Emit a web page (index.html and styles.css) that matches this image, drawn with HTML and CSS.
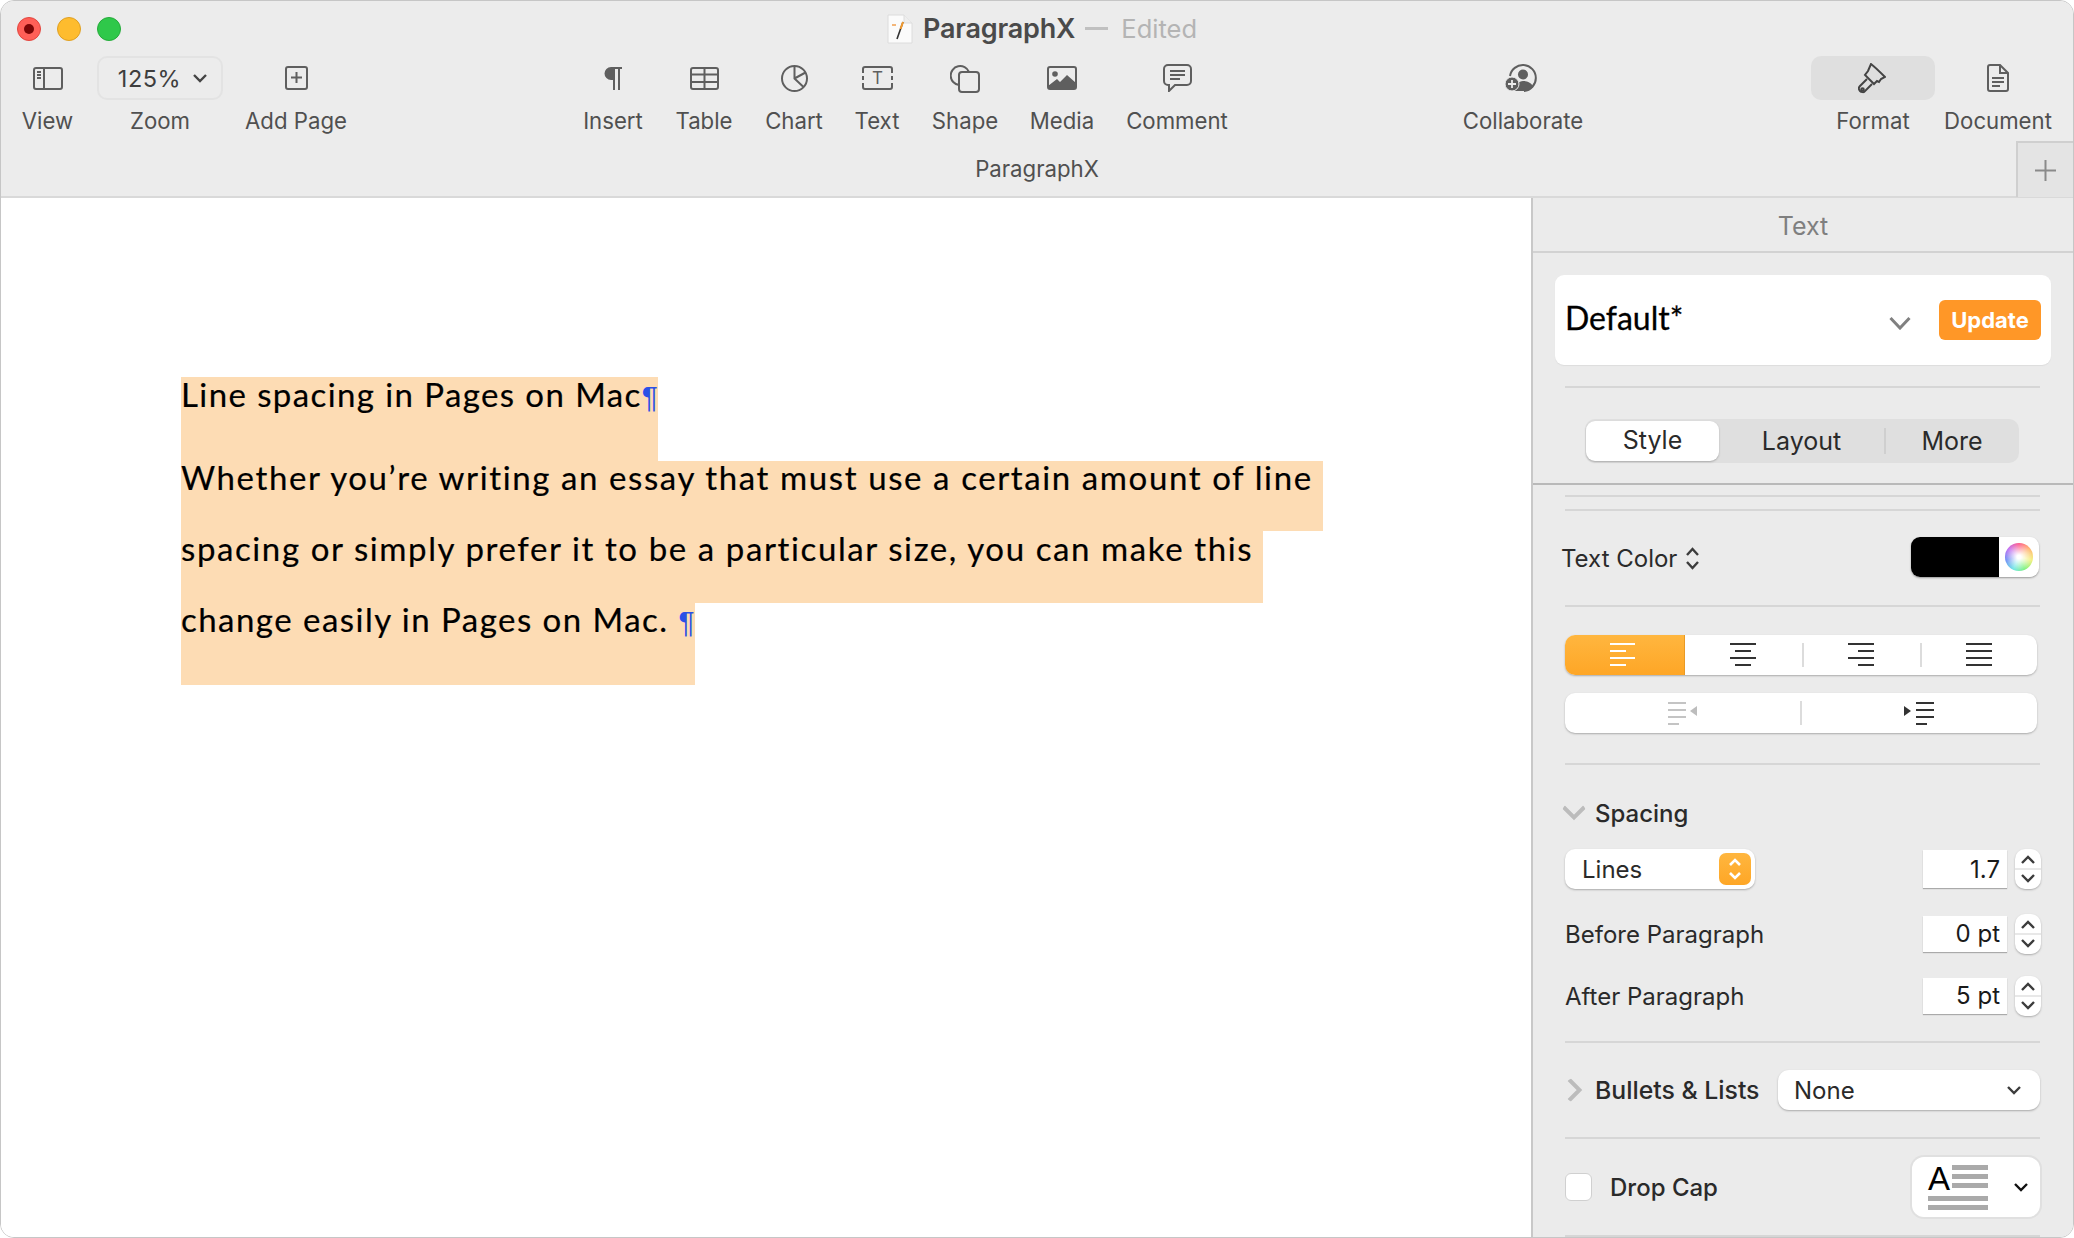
FILE: index.html
```html
<!DOCTYPE html>
<html lang="en">
<head>
<meta charset="utf-8">
<title>ParagraphX</title>
<link rel="stylesheet" href="styles.css">
</head>
<body>
<div class="window">
  <header class="toolbar">
    <div class="titlebar">
      <div class="lights">
        <span class="light red"><i></i></span>
        <span class="light yellow"></span>
        <span class="light green"></span>
      </div>
      <div class="title">
        <svg class="docicon" viewBox="0 0 26 30"><path d="M1 1h16l8 8v20H1z" fill="#fbfbfb" stroke="#dcdcdc"/><path d="M17 1v8h8" fill="#eee" stroke="#dcdcdc"/><path d="M16 8l-6 17" stroke="#333" stroke-width="1.600"/><path d="M16 8l-2.500 7" stroke="#f29a2e" stroke-width="2"/><path d="M5 10h4v2H5z" fill="#f3b679"/></svg>
        <b>ParagraphX</b><span class="dash"></span><span class="edited">Edited</span>
      </div>
    </div>
    <div class="tools">
      <div class="tool">
        <div class="ti"><svg width="30" height="23" viewBox="0 0 30 23" class="ic"><rect x="1" y="1" width="28" height="21" rx="2"/><path d="M11 1v21M4 5h4M4 8h4M4 11h4"/></svg></div>
        <span>View</span>
      </div>
      <div class="tool">
        <div class="ti zoombox"><em>125%</em><svg width="14" height="9" viewBox="0 0 14 9" class="ic thick"><path d="M1 1l6 6 6-6"/></svg></div>
        <span>Zoom</span>
      </div>
      <div class="tool">
        <div class="ti"><svg width="23" height="24" viewBox="0 0 23 24" class="ic"><rect x="1" y="1" width="21" height="22" rx="2"/><path d="M11.500 6v11M6 11.500h11"/></svg></div>
        <span>Add Page</span>
      </div>
      <div class="gap"></div>
      <div class="tool">
        <div class="ti"><svg width="20" height="25" viewBox="0 0 20 25"><path d="M8 1h11v2h-2v21h-2V3h-3v21H10V14H8A6.500 6.500 0 0 1 8 1z" fill="#5f5f5f"/></svg></div>
        <span>Insert</span>
      </div>
      <div class="tool">
        <div class="ti"><svg width="29" height="23" viewBox="0 0 29 23" class="ic"><rect x="1" y="1" width="27" height="21" rx="2"/><path d="M1 7.500h27M1 15h27M14.500 1v21"/></svg></div>
        <span>Table</span>
      </div>
      <div class="tool">
        <div class="ti"><svg width="27" height="27" viewBox="0 0 27 27" class="ic"><circle cx="13.500" cy="13.500" r="12.500"/><path d="M13.500 1v12.500l9 8.500M13.500 13.500l11-6"/></svg></div>
        <span>Chart</span>
      </div>
      <div class="tool">
        <div class="ti"><svg width="31" height="24" viewBox="0 0 31 24" class="ic"><path d="M1 7V3a2 2 0 0 1 2-2h25a2 2 0 0 1 2 2v4M1 17v4a2 2 0 0 0 2 2h25a2 2 0 0 0 2-2v-4M1 10v4M30 10v4"/><text x="15.500" y="18" class="icont">T</text></svg></div>
        <span>Text</span>
      </div>
      <div class="tool">
        <div class="ti"><svg width="30" height="29" viewBox="0 0 30 29" class="ic"><path d="M9 21a9.500 9.500 0 1 1 10-13"/><rect x="9" y="8" width="20" height="20" rx="3"/></svg></div>
        <span>Shape</span>
      </div>
      <div class="tool">
        <div class="ti"><svg width="30" height="24" viewBox="0 0 30 24"><rect x="1" y="1" width="28" height="22" rx="2" fill="#ececec" stroke="#5f5f5f" stroke-width="2"/><circle cx="8" cy="8" r="2.800" fill="#5f5f5f"/><path d="M1 20l9-7 3 3 7-7 9 8v6H1z" fill="#5f5f5f"/></svg></div>
        <span>Media</span>
      </div>
      <div class="tool">
        <div class="ti"><svg width="29" height="28" viewBox="0 0 29 28" class="ic"><path d="M5 1h19a4 4 0 0 1 4 4v12a4 4 0 0 1-4 4H12l-6 6v-6H5a4 4 0 0 1-4-4V5a4 4 0 0 1 4-4z"/><path d="M7 7h15M7 11h15M7 15h10"/></svg></div>
        <span>Comment</span>
      </div>
      <div class="gap"></div>
      <div class="tool">
        <div class="ti"><svg class="collab" width="32" height="28" viewBox="0 0 32 28"><path d="M5 12A13 13 0 1 1 19 27" fill="none" stroke="#5f5f5f" stroke-width="2"/><circle cx="18" cy="10.500" r="5" fill="#5f5f5f"/><path d="M10 27c0-6 4-10 8-10s9 2 10 6c-3 3-6 4-10 4z" fill="#5f5f5f"/><circle cx="7" cy="20" r="7" fill="#5f5f5f" stroke="#ececec" stroke-width="1"/><path d="M7 16v8M3 20h8" stroke="#ececec" stroke-width="1.800"/></svg></div>
        <span>Collaborate</span>
      </div>
      <div class="gap"></div>
      <div class="tool">
        <div class="ti active"><svg class="ic darkic brush" width="28" height="31" viewBox="0 0 28 31"><path d="M13 1c4 3 9 8 14 13l-4 2-2 3-2-1-3 3-9-9 3-4z"/><path d="M9 16l-7 7c-2 2-1 4 0 5s4 2 5 0l7-7"/><circle cx="4.500" cy="26.500" r="1.300"/></svg></div>
        <span>Format</span>
      </div>
      <div class="tool">
        <div class="ti"><svg width="22" height="28" viewBox="0 0 22 28" class="ic"><path d="M3 1h10l8 8v16a2 2 0 0 1-2 2H3a2 2 0 0 1-2-2V3a2 2 0 0 1 2-2z"/><path d="M13 1v8h8M5 14h12M5 18h12M5 22h8"/></svg></div>
        <span>Document</span>
      </div>
    </div>
    <div class="tabline">
      <span class="tabname">ParagraphX</span>
      <div class="addtab"><svg width="21" height="21" viewBox="0 0 21 21"><path d="M10.500 0v21M0 10.500h21" stroke="#8a8a8a" stroke-width="2"/></svg></div>
    </div>
  </header>

  <div class="main">
    <main class="doc">
      <div class="line l1"><span>Line spacing in Pages on Mac</span><span class="pil">¶</span></div>
      <div class="line l2"><span>Whether you’re writing an essay that must use a certain amount of line</span></div>
      <div class="line l3"><span>spacing or simply prefer it to be a particular size, you can make this</span></div>
      <div class="line l4"><span>change easily in Pages on Mac. </span><span class="pil">¶</span></div>
    </main>

    <aside class="side">
      <div class="sidehead">Text</div>
      <div class="stylecard">
        <span class="stylename">Default*</span>
        <svg width="22" height="14" viewBox="0 0 22 14" class="chev grey"><path d="M1.500 2l9.500 10 9.500-10"/></svg>
        <span class="update">Update</span>
      </div>
      <div class="rule r21"></div>
      <div class="tabs">
        <span class="seg on">Style</span>
        <span class="seg">Layout</span>
        <i class="segsep"></i>
        <span class="seg">More</span>
      </div>
      <div class="strong"></div>
      <div class="rule r10"></div>
      <div class="rule r12"></div>

      <div class="row colorrow">
        <span class="lbl">Text Color <svg width="15" height="23" viewBox="0 0 15 23" class="chev dark updown"><path d="M2 8l5.500-6 5.500 6M2 15l5.500 6 5.500-6"/></svg></span>
        <div class="well"><span class="swatch"></span><span class="wheelbox"><span class="wheel"></span></span></div>
      </div>
      <div class="rule r28"></div>

      <div class="btngroup g-align">
        <span class="gb on"><svg width="26" height="24" viewBox="0 0 26 24" class="lines white"><path d="M0 2h25M0 9h16M0 16h25M0 23h16"/></svg></span>
        <span class="gb"><svg width="26" height="24" viewBox="0 0 26 24" class="lines"><path d="M0 2h26M5 9h16M0 16h26M5 23h16"/></svg></span>
        <span class="gb sep"><svg width="26" height="24" viewBox="0 0 26 24" class="lines"><path d="M0 2h26M10 9h16M0 16h26M10 23h16"/></svg></span>
        <span class="gb sep"><svg width="26" height="24" viewBox="0 0 26 24" class="lines"><path d="M0 2h26M0 9h26M0 16h26M0 23h26"/></svg></span>
      </div>
      <div class="btngroup g-indent">
        <span class="gb"><svg width="30" height="24" viewBox="0 0 30 24" class="lines faint"><path d="M0 2h18M0 9h18M0 16h18M0 23h11"/><path class="tri" d="M29 5v10l-7-5z"/></svg></span>
        <span class="gb sep"><svg width="30" height="24" viewBox="0 0 30 24" class="lines"><path d="M12 2h18M12 9h18M12 16h18M12 23h11"/><path class="tri" d="M0 5v10l7-5z"/></svg></span>
      </div>
      <div class="rule r30"></div>

      <div class="row sechead">
        <svg width="14" height="9" viewBox="0 0 16 10" class="chev light"><path d="M1 1l7 7 7-7"/></svg>
        <span class="lbl med">Spacing</span>
      </div>
      <div class="row linesrow">
        <div class="pop lines-pop"><span>Lines</span><span class="orange"><svg width="14" height="24" viewBox="0 0 14 24" class="chev whitec"><path d="M2 8l5-5 5 5M2 16l5 5 5-5"/></svg></span></div>
        <div class="numwrap"><span class="num">1.7</span><span class="stepper"><svg width="14" height="9" viewBox="0 0 14 9" class="chev dark"><path d="M1 8l6-6 6 6"/></svg><i></i><svg width="14" height="9" viewBox="0 0 14 9" class="chev dark"><path d="M1 1l6 6 6-6"/></svg></span></div>
      </div>
      <div class="row numrow before">
        <span class="lbl">Before Paragraph</span>
        <div class="numwrap"><span class="num short">0 pt</span><span class="stepper"><svg width="14" height="9" viewBox="0 0 14 9" class="chev dark"><path d="M1 8l6-6 6 6"/></svg><i></i><svg width="14" height="9" viewBox="0 0 14 9" class="chev dark"><path d="M1 1l6 6 6-6"/></svg></span></div>
      </div>
      <div class="row numrow after">
        <span class="lbl">After Paragraph</span>
        <div class="numwrap"><span class="num short">5 pt</span><span class="stepper"><svg width="14" height="9" viewBox="0 0 14 9" class="chev dark"><path d="M1 8l6-6 6 6"/></svg><i></i><svg width="14" height="9" viewBox="0 0 14 9" class="chev dark"><path d="M1 1l6 6 6-6"/></svg></span></div>
      </div>
      <div class="rule r25"></div>

      <div class="row bulletrow">
        <svg width="9" height="14" viewBox="0 0 10 16" class="chev light"><path d="M1 1l7 7-7 7"/></svg>
        <span class="lbl med">Bullets &amp; Lists</span>
        <div class="pop none-pop"><span>None</span><svg width="14" height="9" viewBox="0 0 14 9" class="chev dark"><path d="M1 1l6 6 6-6"/></svg></div>
      </div>
      <div class="rule r27"></div>

      <div class="row droprow">
        <span class="check"></span>
        <span class="lbl med droplbl">Drop Cap</span>
        <div class="pop drop-pop">
          <div class="dropart">
            <div class="droptop"><span class="capa">A</span><span class="bars"><i></i><i></i><i></i></span></div>
            <i class="bar"></i><i class="bar"></i>
          </div>
          <svg width="14" height="9" viewBox="0 0 14 9" class="chev black"><path d="M1 1l6 6 6-6"/></svg>
        </div>
      </div>
      <div class="rule r18"></div>
    </aside>
  </div>
</div>
</body>
</html>
```

FILE: styles.css
```css
* { box-sizing: border-box; }
html, body { margin: 0; background: #fff; }
body { font-family: Inter, "Liberation Sans", sans-serif; }
.window {
  width: 2074px; height: 1238px; display: flex; flex-direction: column;
  border: 1px solid #c6c6c6; border-radius: 14px; overflow: hidden; background: #fff;
}
.toolbar { height: 197px; flex: none; background: #ececec; border-bottom: 2px solid #d9d9d9; display: flex; flex-direction: column; }
.titlebar { height: 55px; flex: none; display: grid; grid-template-columns: 1fr auto 1fr; align-items: center; }
.lights { display: flex; gap: 16px; padding-left: 16px; }
.light { width: 24px; height: 24px; border-radius: 50%; display: flex; align-items: center; justify-content: center; }
.light i { width: 10px; height: 10px; border-radius: 50%; background: #7c0606; }
.red { background: #ff5f57; border: 1px solid #e2463f; }
.yellow { background: #febc2e; border: 1px solid #dfa023; }
.green { background: #2fc84a; border: 1px solid #25ab3a; }
.title { display: flex; align-items: center; font-size: 25px; color: #4a4a4a; grid-column: 2; margin-left: 10px; }
.docicon { width: 26px; height: 30px; margin-right: 10px; }
.title b { font-weight: 600; font-size: 27px; letter-spacing: -0.2px; }
.dash { width: 23px; height: 3px; background: #c0c0c0; margin: 0 13px 0 10px; }
.edited { color: #b4b4b4; font-size: 25.500px; }

.tools {
  height: 85px; flex: none; display: grid;
  grid-template-columns: 93px 132px 140px 204px 86px 96px 84px 82px 94px 100px 130px 201px 160px 200px 140px 110px;
}
.tool { display: flex; flex-direction: column; align-items: center; font-size: 22.200px; color: #505050; }
.tool > span { margin-top: 8px; line-height: 26px; white-space: nowrap; }
.ti { height: 44px; min-width: 124px; display: flex; align-items: center; justify-content: center; gap: 12px; border-radius: 10px; }
.active { background: #dfdfdf; }
.zoombox { border: 2px solid #e3e3e3; width: 126px; padding-left: 5px; }
.zoombox em { font-style: normal; font-size: 23.500px; color: #3e3e3e; letter-spacing: 0.5px; }
.ic { fill: none; stroke: #5f5f5f; stroke-width: 2; }
.ic.thick { stroke-width: 2.400; stroke: #444; }
.ic.darkic { stroke: #444; }
.collab { margin-right: 5px; }
.brush { margin-right: 3px; }
.icont { fill: #5f5f5f; stroke: none; font-size: 17px; text-anchor: middle; font-family: Inter, sans-serif; }

.tabline { flex: 1; display: flex; align-items: stretch; justify-content: center; position: relative; }
.tabname { font-size: 22.200px; color: #505050; line-height: 56px; }
.addtab {
  position: absolute; right: 0; top: 0; bottom: 0; width: 57px;
  background: #e4e4e4; border-left: 2px solid #cfcfcf; border-top: 2px solid #cfcfcf;
  display: flex; align-items: center; justify-content: center;
}

.main { flex: 1; min-height: 0; display: flex; }
.doc { flex: 1; padding: 179px 0 0 180px; background: #fff; font-family: Lato, "Open Sans", sans-serif; font-size: 33px; letter-spacing: 1.600px; color: #000; -webkit-text-stroke: 0.2px #000; }
.line { width: fit-content; background: #fddcb4; white-space: nowrap; line-height: 30px; }
.l1 { height: 84px; padding-top: 2px; letter-spacing: 1.400px; }
.l2 { height: 70px; padding-top: 1px; padding-right: 10px; }
.l3 { height: 72px; padding-top: 2px; padding-right: 10px; }
.l4 { height: 82px; padding-top: 1px; letter-spacing: 1.470px; }
.pil { color: #2b50e6; font-family: "Liberation Sans", sans-serif; font-size: 30px; letter-spacing: 0; -webkit-text-stroke: 0; }

.side { width: 542px; flex: none; background: #ebebeb; border-left: 2px solid #c8c8c8; color: #2a2a2a; font-size: 24px; }
.sidehead { height: 55px; border-bottom: 2px solid #d2d2d2; text-align: center; line-height: 56px; font-size: 25px; color: #7f7f7f; }
.stylecard {
  margin: 22px 22px 0 22px; height: 90px; background: #fff; border-radius: 9px;
  display: flex; align-items: flex-start; padding: 23px 10px 0 10px; box-shadow: 0 1px 1px #ddd;
}
.stylename { flex: 1; font-family: Lato, "Open Sans", sans-serif; font-size: 32px; line-height: 40px; color: #000; -webkit-text-stroke: 0.3px #000; }
.chev { fill: none; stroke-width: 2.400; flex: none; }
.chev.grey { stroke: #808080; stroke-width: 3; margin: 18px 28px 0 0; }
.update { width: 102px; height: 40px; margin-top: 2px; background: #ff9727; border-radius: 6px; color: #fff; font-weight: 700; font-size: 22px; text-align: center; line-height: 40px; }

.rule { height: 2px; background: #d6d6d6; margin-left: 32px; margin-right: 33px; }
.r21 { margin-top: 21px; } .r10 { margin-top: 10px; } .r12 { margin-top: 12px; }
.r28 { margin-top: 28px; } .r30 { margin-top: 30px; } .r25 { margin-top: 25px; }
.r27 { margin-top: 27px; } .r18 { margin-top: 18px; }
.strong { height: 2px; background: #b9b9b9; margin-top: 20px; }

.tabs { margin: 31px 54px 0 52px; height: 44px; background: #dfdfdf; border-radius: 10px; display: grid; grid-template-columns: 133px 165px 1px 1fr; align-items: center; text-align: center; padding-left: 1px; font-size: 25px; color: #2a2a2a; }
.seg { line-height: 38px; }
.seg.on { background: #fff; border-radius: 9px; box-shadow: 0 1px 2px #aaa; height: 40px; }
.segsep { width: 2px; height: 26px; background: #cfcfcf; }

.row { display: flex; align-items: center; margin-left: 32px; margin-right: 33px; height: 40px; }
.lbl { white-space: nowrap; }
.med { font-weight: 500; }
.colorrow { margin-top: 26px; justify-content: space-between; margin-right: 34px; }
.colorrow .lbl { margin-left: -4px; display: flex; align-items: center; gap: 8px; padding-top: 3px; }
.chev.dark { stroke: #3c3c3c; }
.well { width: 128px; height: 40px; border-radius: 9px; overflow: hidden; display: flex; background: #fff; box-shadow: 0 1px 2px #999; }
.swatch { width: 88px; background: #000; }
.wheelbox { flex: 1; display: flex; align-items: center; justify-content: center; }
.wheel { width: 28px; height: 28px; border-radius: 50%; background: radial-gradient(circle, #fff 10%, rgba(255,255,255,0) 70%), conic-gradient(#ff5a8a, #ffb36b, #f4ef7a, #7cf27c, #6ee6e6, #6d8cf5, #c06df0, #ff5a8a); }

.btngroup { margin-left: 32px; width: 472px; height: 40px; background: #fff; border-radius: 10px; overflow: hidden; display: flex; box-shadow: 0 1px 2px #aaa; }
.g-align { margin-top: 28px; }
.g-indent { margin-top: 18px; }
.gb { flex: 1; display: flex; align-items: center; justify-content: center; position: relative; }
.g-align .gb { flex: none; width: 118px; padding: 0 3px 2px 0; }
.g-align .gb.on { width: 120px; background: linear-gradient(#ffb63f, #fea626); border-right: 1px solid #e99a25; }
.sep::before { content: ""; position: absolute; left: -1px; top: 8px; height: 24px; width: 2px; background: #dcdcdc; }
.lines { fill: none; stroke: #333; stroke-width: 2; }
.lines.white { stroke: #fff; }
.lines.faint { stroke: #c4c4c4; }
.tri { fill: #333; stroke: none; }
.faint .tri { fill: #bdbdbd; }

.sechead { margin-top: 28px; gap: 9px; margin-left: 29px; }
.chev.light { stroke: #bcbcbc; stroke-width: 2.600; }
.linesrow { margin-top: 16px; justify-content: space-between; margin-right: 32px; }
.pop { background: #fff; border-radius: 10px; box-shadow: 0 1px 2px #aaa; display: flex; align-items: center; height: 40px; }
.lines-pop { width: 190px; padding-left: 17px; justify-content: space-between; padding-right: 4px; }
.orange { width: 32px; height: 32px; background: linear-gradient(#ffb63f, #fea626); border-radius: 7px; display: flex; align-items: center; justify-content: center; }
.chev.whitec { stroke: #fff; stroke-width: 2.600; }
.numwrap { display: flex; align-items: center; gap: 8px; }
.num { width: 84px; height: 38px; background: #fff; box-shadow: 0 1px 1px #aaa; text-align: right; padding-right: 7px; line-height: 40px; font-size: 24px; color: #1a1a1a; }
.num.short { height: 36px; line-height: 36px; }
.stepper { width: 26px; height: 40px; background: #fff; border-radius: 10px; box-shadow: 0 1px 2px #aaa; display: flex; flex-direction: column; align-items: center; justify-content: space-between; padding: 6px 0; }
.stepper i { width: 100%; height: 2px; background: #e8e8e8; }
.numrow { justify-content: space-between; margin-right: 32px; }
.before { margin-top: 25px; }
.after { margin-top: 22px; }

.bulletrow { margin-top: 27px; margin-left: 30px; margin-right: 33px; }
.bulletrow .lbl { margin-left: 8px; font-size: 24.800px; }
.none-pop { margin-left: auto; width: 262px; padding: 0 19px 0 16px; justify-content: space-between; border-radius: 11px; }
.droprow { margin-top: 18px; height: 60px; margin-right: 33px; }
.check { width: 27px; height: 28px; background: #fff; border: 1px solid #d0d0d0; border-radius: 6px; flex: none; }
.droplbl { margin-left: 18px; }
.drop-pop { margin-left: auto; width: 128px; height: 60px; padding: 0 12px 0 16px; justify-content: space-between; border-radius: 12px; box-shadow: 0 0 0 2px #e0e0e0; }
.chev.black { stroke: #111; }
.dropart { width: 60px; display: flex; flex-direction: column; gap: 4px; }
.droptop { display: flex; height: 27px; justify-content: space-between; }
.capa { font-family: "Liberation Sans", sans-serif; font-size: 33px; line-height: 27px; color: #000; }
.bars { display: flex; flex-direction: column; gap: 4px; width: 36px; }
.bars i, .bar { display: block; height: 5px; background: #aaa; }
```
